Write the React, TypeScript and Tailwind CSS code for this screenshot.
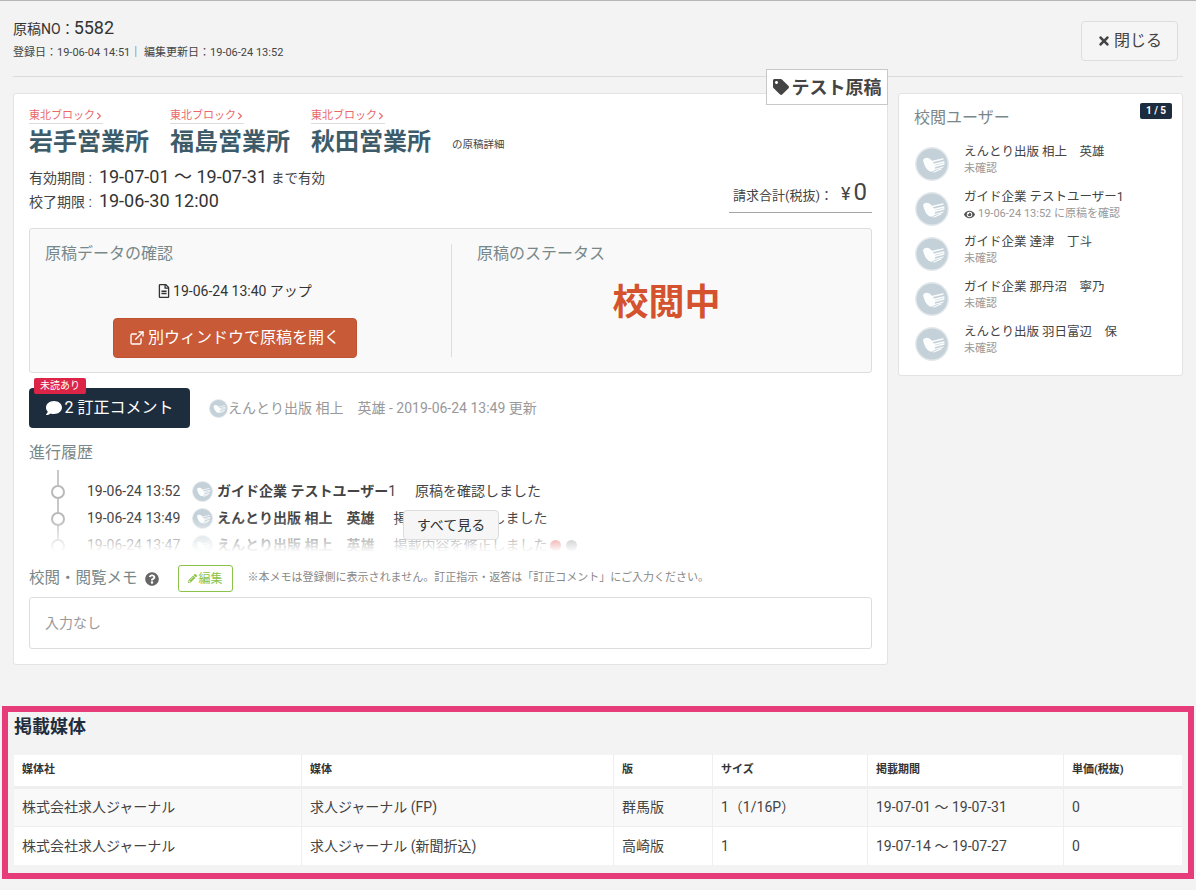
import React from "react";
import { ExternalLink } from "lucide-react";
import { FaTag, FaTimes, FaComment, FaEye, FaRegFileAlt, FaPencilAlt, FaQuestionCircle, FaChevronRight } from "react-icons/fa";

function Avatar({ size = 34 }: { size?: number }) {
  return (
    <svg width={size} height={size} viewBox="0 0 34 34" className="shrink-0">
      <circle cx="17" cy="17" r="16.2" fill="#c4d1d9" stroke="#e4e9ec" strokeWidth="1.4" />
      <path d="M8 13c2-3 6-3 9 1l3 4c1 5-2 8-6 6-3-2-5-6-6-11z" fill="#fff" opacity="0.95" />
      <path d="M15 15l13-3M16 18l13-3M17 20l12-3M18 23l10-3M19 25l7-3" stroke="#fff" strokeWidth="1.3" strokeLinecap="round" fill="none" opacity="0.95" />
    </svg>
  );
}

const blocks = ["岩手営業所", "福島営業所", "秋田営業所"];

const users = [
  { name: "えんとり出版 相上　英雄", sub: "未確認" },
  { name: "ガイド企業 テストユーザー1", sub: "19-06-24 13:52 に原稿を確認", eye: true },
  { name: "ガイド企業 達津　丁斗", sub: "未確認" },
  { name: "ガイド企業 那丹沼　寧乃", sub: "未確認" },
  { name: "えんとり出版 羽日富辺　保", sub: "未確認" },
];

const history = [
  { time: "19-06-24 13:52", who: "ガイド企業 テストユーザー", tail: "1", msg: "原稿を確認しました" },
  { time: "19-06-24 13:49", who: "えんとり出版 相上　英雄", tail: "", msg: "掲載内容を修正しました" },
  { time: "19-06-24 13:47", who: "えんとり出版 相上　英雄", tail: "", msg: "掲載内容を修正しました", dots: true },
];

const rows = [
  ["株式会社求人ジャーナル", "求人ジャーナル (FP)", "群馬版", "1（1/16P）", "19-07-01 〜 19-07-31", "0"],
  ["株式会社求人ジャーナル", "求人ジャーナル (新聞折込)", "高崎版", "1", "19-07-14 〜 19-07-27", "0"],
];
const heads = ["媒体社", "媒体", "版", "サイズ", "掲載期間", "単価(税抜)"];

const font = "font-['Roboto','Noto_Sans_CJK_JP',sans-serif]";

export default function App() {
  return (
    <div className={`${font} w-[1196px] h-[890px] overflow-hidden bg-[#f3f3f3] text-[#333] border-t border-[#b5b5b5]`}>
      {/* header */}
      <div className="mx-[13px] h-[76px] border-b border-[#dcdcdc] flex justify-between pr-[5px]">
        <div>
          <div className="mt-[17px] h-[20px] flex items-baseline text-[14px] leading-[20px] text-[#333]">
            原稿NO：<span className="text-[18px] ml-[-1px]">5582</span>
          </div>
          <div className="mt-[7px] text-[11px] leading-[16px] text-[#444]">登録日：19-06-04 14:51｜ 編集更新日：19-06-24 13:52</div>
        </div>
        <button className="mt-[20px] w-[97px] h-[40px] rounded-[4px] border border-[#dddddd] bg-[#f5f5f5] flex items-center justify-center gap-[3px] text-[16px] text-[#444]">
          <FaTimes size={14} />閉じる
        </button>
      </div>

      <div className="mx-[13px] mt-[16px] flex gap-[10px] items-start h-[572px]">
        {/* main card */}
        <div className="relative w-[875px] h-[572px] bg-white rounded-[3px] border border-[#e3e3e3] px-[15px] pt-[15px]">
          <div className="absolute right-[-1px] top-[-25px] w-[122px] h-[36px] bg-white border border-[#c8c8c8] flex items-center justify-center gap-[3px] text-[18px] font-bold text-[#444]">
            <FaTag size={16} />テスト原稿
          </div>

          <div className="flex items-end">
            {blocks.map((b) => (
              <div key={b} className="w-[121px] mr-[20px]">
                <div className="w-[74px] h-[15px] border-b border-[#dddddd] flex items-center whitespace-nowrap text-[11px] leading-[14px] text-[#e9696b]">
                  東北ブロック<FaChevronRight size={8} className="shrink-0" />
                </div>
                <div className="text-[24px] leading-[36px] font-bold text-[#3e5b69] whitespace-nowrap">{b}</div>
              </div>
            ))}
            <div className="text-[10.5px] leading-[16px] mb-[7px] text-[#444]">の原稿詳細</div>
          </div>

          <div className="flex justify-between mt-[5px] h-[60px]">
            <div>
              <div className="h-[24px] flex items-baseline text-[14px] leading-[24px] text-[#444]">
                有効期間 : <span className="text-[18px] text-[#333] ml-[7px]">19-07-01 〜 19-07-31</span><span className="text-[13.5px] ml-[4px]">まで有効</span>
              </div>
              <div className="h-[24px] flex items-baseline text-[14px] leading-[24px] text-[#444]">
                校了期限 : <span className="text-[18px] text-[#333] ml-[7px]">19-06-30 12:00</span>
              </div>
            </div>
            <div className="w-[143px] h-[35px] mt-[13px] border-b border-[#a5a5a5] pl-[4px] flex items-baseline text-[13px] leading-[28px] text-[#444] whitespace-nowrap">
              請求合計(税抜)： <span className="text-[18px] ml-[8px]">¥</span><span className="text-[24px] ml-[3px]">0</span>
            </div>
          </div>

          {/* status panel */}
          <div className="mt-[3px] h-[145px] rounded-[3px] border border-[#dddddd] bg-[#f9f9f9] flex pt-[15px]">
            <div className="w-[422px] h-[113px] border-r border-[#dddddd] pl-[15px] pr-[27px]">
              <div className="text-[16px] leading-[20px] text-[#78888a]">原稿データの確認</div>
              <div className="mt-[17px] flex items-center justify-center gap-[2px] text-[14px] leading-[20px] text-[#333]">
                <FaRegFileAlt size={14} />19-06-24 13:40 アップ
              </div>
              <div className="flex justify-center mt-[17px]">
                <button className="w-[244px] h-[40px] rounded-[4px] bg-[#c85a38] border border-[#bd5232] text-white text-[16px] flex items-center justify-center gap-[3px]">
                  <ExternalLink size={16} />別ウィンドウで原稿を開く
                </button>
              </div>
            </div>
            <div className="flex-1 pl-[25px] pr-[15px]">
              <div className="text-[16px] leading-[20px] text-[#78888a]">原稿のステータス</div>
              <div className="mt-[15px] text-center text-[36px] leading-[48px] font-bold text-[#d4532e]">校閲中</div>
            </div>
          </div>

          {/* comment */}
          <div className="mt-[15px] flex items-center h-[40px]">
            <div className="relative w-[161px] h-[40px] rounded-[4px] bg-[#1e2d3d] text-white flex items-center justify-center gap-[3px] text-[16px]">
              <span className="absolute left-[5px] top-[-10px] w-[52px] h-[16px] rounded-[2px] bg-[#dc2546] text-[10px] leading-[16px] text-center">未読あり</span>
              <FaComment size={16} />2 訂正コメント
            </div>
            <div className="ml-[19px] flex items-center text-[14px] text-[#999]">
              <Avatar size={19} />えんとり出版 相上　英雄 - 2019-06-24 13:49 更新
            </div>
          </div>

          {/* history */}
          <div className="mt-[15px] text-[16px] leading-[20px] text-[#78888a]">進行履歴</div>
          <div className="relative mt-[7px] h-[82px] overflow-hidden">
            <div className="absolute left-[28px] top-0 bottom-0 w-[2px] bg-[#c8c8c8]" />
            <div className="pt-[8px]">
              {history.map((h) => (
                <div key={h.time} className="relative h-[27px] flex items-center pl-[58px] text-[14px] text-[#444] whitespace-nowrap">
                  <span className="absolute left-[22px] top-[7px] w-[14px] h-[14px] rounded-full border-2 border-[#b9b9b9] bg-white" />
                  <span className="w-[105px]">{h.time}</span>
                  <Avatar size={21} />
                  <span className="ml-[4px] font-bold">{h.who}</span>
                  <span>{h.tail}</span>
                  <span className="ml-[19px]">{h.msg}</span>
                  {h.dots && (
                    <span className="ml-[3px] flex gap-[5px]">
                      <span className="w-[11px] h-[11px] rounded-full bg-[#dc3c3c]" />
                      <span className="w-[11px] h-[11px] rounded-full bg-[#888]" />
                    </span>
                  )}
                </div>
              ))}
            </div>
            <div className="absolute left-0 right-0 bottom-0 h-[34px] bg-gradient-to-b from-white/0 to-white" />
            <button className="absolute left-[374px] top-[40px] w-[96px] h-[30px] rounded-[4px] border border-[#dddddd] bg-[#f6f6f6] text-[14px] text-[#333]">すべて見る</button>
          </div>

          {/* memo */}
          <div className="mt-[13px] flex items-center h-[27px]">
            <span className="text-[15.5px] text-[#78888a]">校閲・閲覧メモ</span>
            <FaQuestionCircle size={14} className="ml-[7px] text-[#666]" />
            <button className="ml-[19px] w-[55px] h-[27px] rounded-[3px] border border-[#8bc34a] bg-white text-[12px] text-[#8bc34a] flex items-center justify-center gap-[2px]">
              <FaPencilAlt size={9} />編集
            </button>
            <span className="ml-[15px] text-[11px] text-[#888]">※本メモは登録側に表示されません。訂正指示・返答は「訂正コメント」にご入力ください。</span>
          </div>
          <div className="mt-[5px] h-[52px] rounded-[3px] border border-[#dddddd] flex items-center px-[15px] text-[14px] text-[#999]">入力なし</div>
        </div>

        {/* side card */}
        <div className="relative w-[285px] h-[283px] bg-white rounded-[3px] border border-[#e3e3e3] pl-[15px] pt-[13px]">
          <div className="absolute right-[10px] top-[9px] w-[32px] h-[16px] rounded-[2px] bg-[#1e2d3d] text-white text-[10px] leading-[16px] font-bold text-center">1 / 5</div>
          <div className="text-[16px] leading-[22px] text-[#78888a]">校閲ユーザー</div>
          <div className="mt-[18px]">
            {users.map((u) => (
              <div key={u.name} className="h-[45px] flex items-start">
                <div className="ml-[1px] w-[49px]"><Avatar /></div>
                <div className="-mt-[4px]">
                  <div className="text-[12.5px] leading-[18px] text-[#444]">{u.name}</div>
                  <div className="text-[11px] leading-[16px] text-[#999] flex items-center gap-[3px]">
                    {u.eye && <FaEye size={11} className="text-[#555]" />}{u.sub}
                  </div>
                </div>
              </div>
            ))}
          </div>
        </div>
      </div>

      {/* highlighted section */}
      <div className="mx-[2px] mt-[41px] w-[1192px] h-[173px] border-[6px] border-[#e63c7a] px-[6px]">
        <div className="text-[18px] leading-[26px] mt-[2px] font-bold text-[#1f2d3d]">掲載媒体</div>
        <div className="mt-[15px] w-[1168px] bg-white">
          <div className="grid grid-cols-[287px_312px_99px_155px_196px_119px] h-[34px] border-b-[3px] border-[#efefef] items-stretch text-[11px] font-bold text-[#333]">
            {heads.map((h, i) => (
              <div key={h} className={`flex items-center pl-[8px] ${i > 0 ? "border-l border-[#eeeeee]" : ""}`}>{h}</div>
            ))}
          </div>
          {rows.map((r, ri) => (
            <div key={ri} className={`grid grid-cols-[287px_312px_99px_155px_196px_119px] h-[38px] text-[14px] text-[#444] ${ri === 0 ? "bg-[#f9f9f9] border-b border-[#eeeeee]" : "bg-white"}`}>
              {r.map((c, i) => (
                <div key={i} className={`flex items-center pl-[8px] whitespace-nowrap ${i > 0 ? "border-l border-[#eeeeee]" : ""}`}>{c}</div>
              ))}
            </div>
          ))}
        </div>
      </div>
    </div>
  );
}
